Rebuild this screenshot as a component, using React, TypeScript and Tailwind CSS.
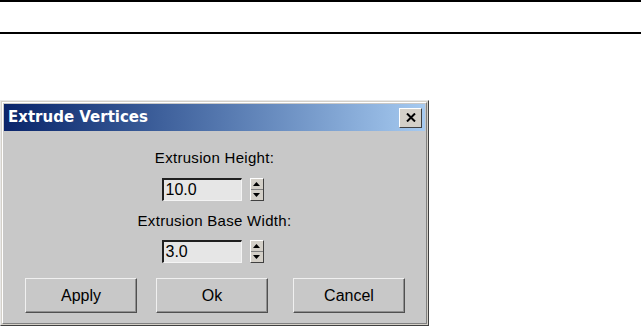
import React from "react";

function Spinner() {
  return (
    <div className="flex flex-col w-[14px] h-[23px] ml-[8px] border border-t-white border-l-white border-b-[#404040] border-r-[#404040] bg-[#d4d0c8]">
      <div className="flex-1 flex items-center justify-center border-b border-b-[#808080]">
        <svg width="7" height="4" viewBox="0 0 7 4"><path d="M3.5 0 L7 4 L0 4 Z" fill="#000" /></svg>
      </div>
      <div className="flex-1 flex items-center justify-center">
        <svg width="7" height="4" viewBox="0 0 7 4"><path d="M0 0 L7 0 L3.5 4 Z" fill="#000" /></svg>
      </div>
    </div>
  );
}

function Field({ value }: { value: string }) {
  return (
    <div className="flex items-center mr-[4px]">
      <div className="w-[80px] h-[23px] bg-[#e6e6e6] border-t-2 border-l-2 border-t-[#202020] border-l-[#202020] border-b border-r border-b-[#f4f4f4] border-r-[#f4f4f4] flex items-center pl-[2px] text-[16px] leading-none text-black">
        {value}
      </div>
      <Spinner />
    </div>
  );
}

function Btn({ label, className = "" }: { label: string; className?: string }) {
  return (
    <div className={"w-[112px] h-[35px] flex items-center justify-center border border-t-[#f0f0f0] border-l-[#f0f0f0] border-b-[#505050] border-r-[#505050] bg-[#c8c8c8] text-[16px] text-black shadow-[inset_-1px_-1px_0_#909090] " + className}>
      {label}
    </div>
  );
}

export default function App() {
  return (
    <div className="w-[641px] h-[326px] bg-white overflow-hidden" style={{ fontFamily: '"Liberation Sans", Arial, sans-serif' }}>
      <div className="h-[2px] bg-black" />
      <div className="h-[30px]" />
      <div className="h-[2px] bg-black" />
      <div className="h-[66px]" />
      <div className="w-[429px] h-[226px] bg-[#d4d0c8] border border-t-[#e8e8e8] border-l-[#e8e8e8] border-b-[#404040] border-r-[#404040] p-[1px] flex flex-col">
        <div className="flex-1 flex flex-col bg-[#c8c8c8] border border-t-white border-l-white border-b-[#808080] border-r-[#808080] p-[1px]">
          <div className="h-[27px] shrink-0 flex items-center justify-between pl-[4px] pr-[3px] bg-gradient-to-r from-[#0a246a] to-[#a6caf0]">
            <span className="text-white font-bold" style={{ fontFamily: '"DejaVu Sans", sans-serif', fontSize: '15px' }}>Extrude Vertices</span>
            <div className="w-[23px] h-[20px] bg-[#d4d0c8] border border-t-white border-l-white border-b-[#404040] border-r-[#404040] flex items-center justify-center">
              <svg width="10" height="9" viewBox="0 0 10 9"><path d="M1 0.5 L9 8.5 M9 0.5 L1 8.5" stroke="#000" strokeWidth="2" /></svg>
            </div>
          </div>
          <div className="flex flex-col items-center pt-[18px]">
            <div className="text-[15px] leading-[18px] text-black tracking-[0.3px]">Extrusion Height:</div>
            <div className="mt-[11px]"><Field value="10.0" /></div>
            <div className="mt-[11px] text-[15px] leading-[18px] text-black tracking-[0.3px]">Extrusion Base Width:</div>
            <div className="mt-[10px]"><Field value="3.0" /></div>
          </div>
          <div className="flex pl-[21px] mt-[15px]">
            <Btn label="Apply" />
            <Btn label="Ok" className="ml-[19px]" />
            <Btn label="Cancel" className="ml-[25px]" />
          </div>
        </div>
      </div>
    </div>
  );
}
